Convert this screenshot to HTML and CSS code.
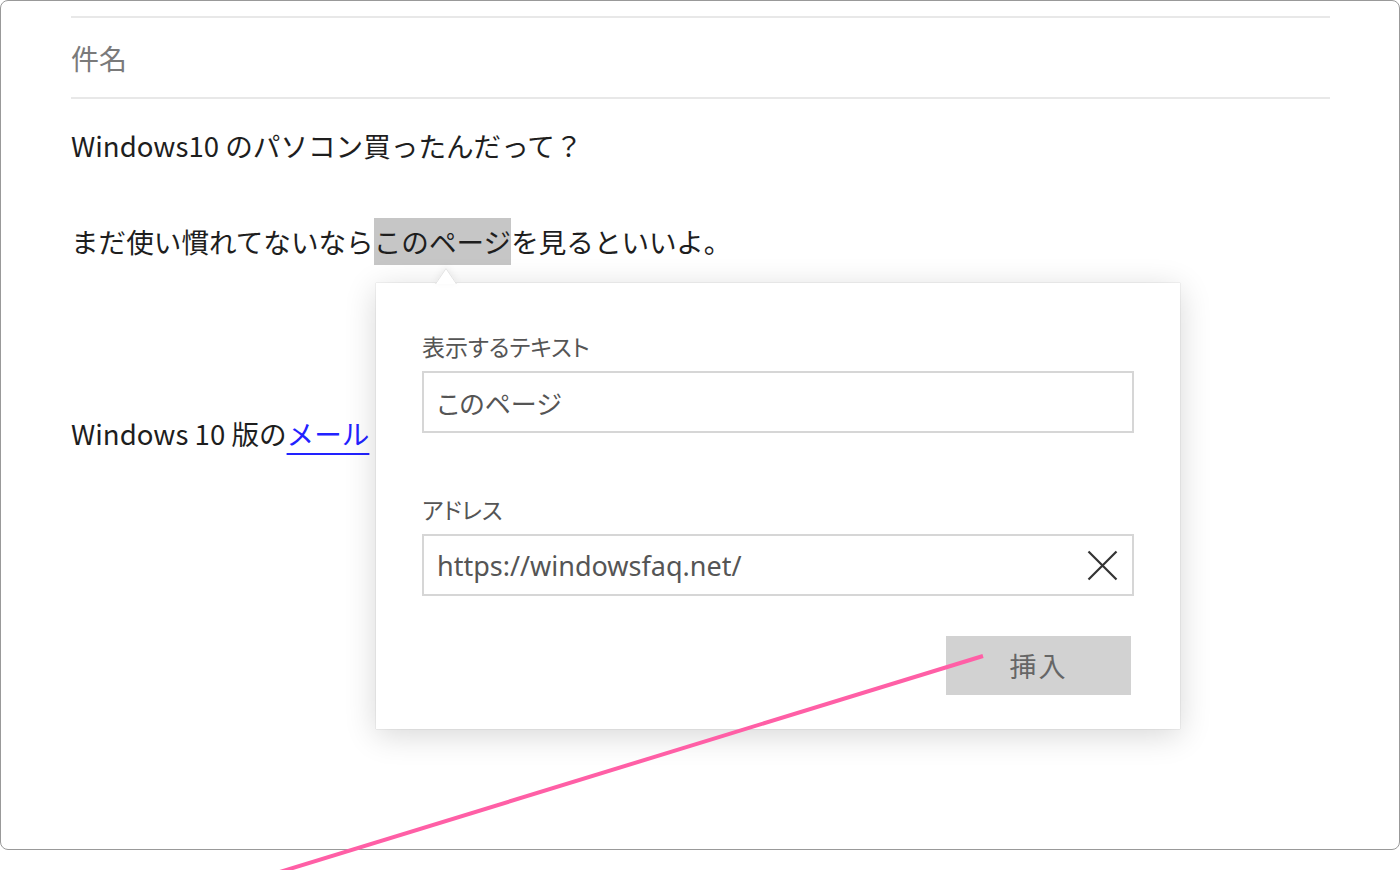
FILE: index.html
```html
<!DOCTYPE html>
<html lang="ja">
<head>
    <meta charset="UTF-8">
    <title>リンクの挿入</title>
    <link rel="stylesheet" href="styles.css">
</head>
<body>
    <div class="frame">
        <div class="compose">
            <div class="subject">件名</div>
            <div class="message">
                <p>Windows10 のパソコン買ったんだって？</p>
                <p class="blank"></p>
                <p>まだ使い慣れてないなら<span class="selected">このページ</span>を見るといいよ。</p>
                <p class="blank"></p>
                <p class="blank"></p>
                <p class="blank"></p>
                <p>Windows 10 版の<a href="#">メール</a>・アプリの使い方もまとめてあるよ。</p>
            </div>
        </div>

        <!-- link dialog -->
        <div class="link-popup">
            <svg class="popup-arrow" width="22" height="17" viewBox="0 0 22 17">
                <polygon points="0,17 11,1 22,17" fill="#fff"/>
                <polyline points="0.5,17 11,1.5 21.5,17" fill="none" stroke="#e2e2e2" stroke-width="1"/>
            </svg>
            <label class="field-label" for="linkText">表示するテキスト</label>
            <div class="field">
                <input id="linkText" class="jp" type="text" value="このページ">
            </div>
            <label class="field-label" for="linkUrl">アドレス</label>
            <div class="field">
                <input id="linkUrl" type="text" value="https://windowsfaq.net/">
                <span class="clear-btn">
                    <svg width="31" height="31" viewBox="0 0 31 31">
                        <path d="M1.5 1.5 L29.5 29.5 M29.5 1.5 L1.5 29.5" stroke="#333" stroke-width="2.2" fill="none"/>
                    </svg>
                </span>
            </div>
            <div class="actions">
                <button class="insert-btn">挿入</button>
            </div>
        </div>
    </div>

    <!-- annotation line -->
    <svg class="annotation" width="1400" height="870" viewBox="0 0 1400 870">
        <line x1="983" y1="656" x2="270" y2="875" stroke="#ff5fa6" stroke-width="4"/>
    </svg>
</body>
</html>
```

FILE: styles.css
```css
:root {
    --frame-border: #999;
    --rule-color: #e8e8e8;
    --text-color: #1e1e1e;
    --muted-text: #7a7a7a;
    --label-color: #555;
    --input-border: #d6d6d6;
    --button-bg: #d2d2d2;
    --select-bg: #c6c6c6;
    --link-color: #2222ff;
}

body {
    margin: 0;
    background: #fff;
    font-family: "Noto Sans CJK JP", sans-serif;
    color: var(--text-color);
}

.frame {
    position: relative;
    width: 1400px;
    height: 850px;
    box-sizing: border-box;
    border: 1px solid var(--frame-border);
    border-radius: 8px;
    overflow: hidden;
}

.compose {
    padding: 15px 69px 0 70px;
}

.subject {
    height: 79px;
    display: flex;
    align-items: center;
    border-top: 2px solid var(--rule-color);
    border-bottom: 2px solid var(--rule-color);
    font-size: 28px;
    color: var(--muted-text);
}

.message {
    padding-top: 22px;
}

.message p {
    margin: 0;
    height: 48px;
    line-height: 48px;
    font-size: 27.6px;
    white-space: nowrap;
}

.selected {
    display: inline-block;
    line-height: 47px;
    background: var(--select-bg);
}

.message a {
    color: var(--link-color);
    text-decoration: underline;
    text-decoration-thickness: 2px;
    text-underline-offset: 8px;
}

/* popup */
.link-popup {
    position: absolute;
    left: 375px;
    top: 282px;
    width: 804px;
    height: 446px;
    box-sizing: border-box;
    padding: 48px 46px 0 46px;
    background: #fff;
    box-shadow: 0 0 1px rgba(0, 0, 0, 0.25), 0 6px 30px rgba(0, 0, 0, 0.16);
    font-family: "Noto Sans", "Noto Sans CJK JP", sans-serif;
}

.popup-arrow {
    position: absolute;
    left: 59px;
    top: -16px;
    filter: drop-shadow(0 -2px 3px rgba(0, 0, 0, 0.06));
}

.field-label {
    display: block;
    height: 30px;
    line-height: 30px;
    font-family: "Noto Sans CJK JP", sans-serif;
    font-size: 23px;
    font-feature-settings: "palt";
    color: var(--label-color);
    margin-bottom: 10px;
}

.field {
    position: relative;
    height: 62px;
    box-sizing: border-box;
    border: 2px solid var(--input-border);
    margin-bottom: 61px;
}

.field:nth-of-type(2) {
    margin-bottom: 40px;
}

.field input {
    width: 100%;
    height: 100%;
    box-sizing: border-box;
    border: none;
    outline: none;
    padding: 0 60px 0 13px;
    font-family: "Noto Sans", "Noto Sans CJK JP", sans-serif;
    font-size: 27px;
    color: var(--label-color);
    background: transparent;
}

.field input.jp {
    font-family: "Noto Sans CJK JP", sans-serif;
    font-size: 26px;
    font-feature-settings: "palt";
}

.clear-btn {
    position: absolute;
    right: 14px;
    top: 14px;
    width: 31px;
    height: 31px;
}

.clear-btn svg {
    display: block;
}

.actions {
    display: flex;
    justify-content: flex-end;
    padding-right: 3px;
}

.insert-btn {
    width: 185px;
    height: 59px;
    border: none;
    background: var(--button-bg);
    font-family: "Noto Sans CJK JP", sans-serif;
    font-size: 27px;
    color: #666;
    letter-spacing: 2px;
}

.annotation {
    position: absolute;
    left: 0;
    top: 0;
    pointer-events: none;
}
```
